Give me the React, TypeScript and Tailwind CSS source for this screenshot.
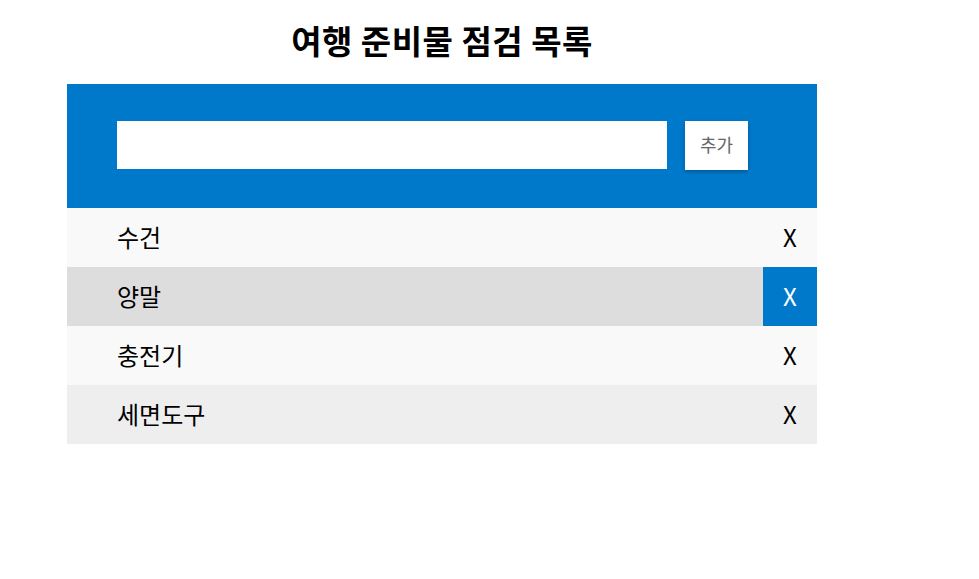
const items = [
  { id: 1, name: "수건", bg: "bg-[#f9f9f9]", hover: false },
  { id: 2, name: "양말", bg: "bg-[#dddddd]", hover: true },
  { id: 3, name: "충전기", bg: "bg-[#f9f9f9]", hover: false },
  { id: 4, name: "세면도구", bg: "bg-[#eeeeee]", hover: false },
];

const App = () => {
  return (
    <div className="min-h-[579px] bg-white font-['Noto_Sans_CJK_KR','Noto_Sans',sans-serif] text-black">
      <div className="ml-[67px] w-[750px]">
        <h1 className="pt-[17px] pb-[21px] text-center text-[33px] font-bold leading-[46px] tracking-[0.5px]">
          여행 준비물 점검 목록
        </h1>
        <div className="flex items-start bg-[#0079ca] pt-[37px] pb-[38px] pl-[50px]">
          <input className="h-[48px] w-[550px] bg-white px-3 text-lg outline-none" />
          <button className="ml-[18px] h-[49px] w-[63px] bg-white pb-[2px] text-[18px] text-[#666] shadow-[0_2px_4px_rgba(0,0,0,0.25)]">
            추가
          </button>
        </div>
        <ul>
          {items.map((item) => (
            <li key={item.id} className={`flex h-[59px] items-center ${item.bg}`}>
              <span className="flex-1 pb-[2px] pl-[50px] text-[24px]">{item.name}</span>
              <span
                className={`flex h-full w-[54px] items-center justify-center pb-[2px] text-[24px] ${
                  item.hover ? "bg-[#0079ca] text-white" : ""
                }`}
              >
                X
              </span>
            </li>
          ))}
        </ul>
      </div>
    </div>
  );
};

export default App;
